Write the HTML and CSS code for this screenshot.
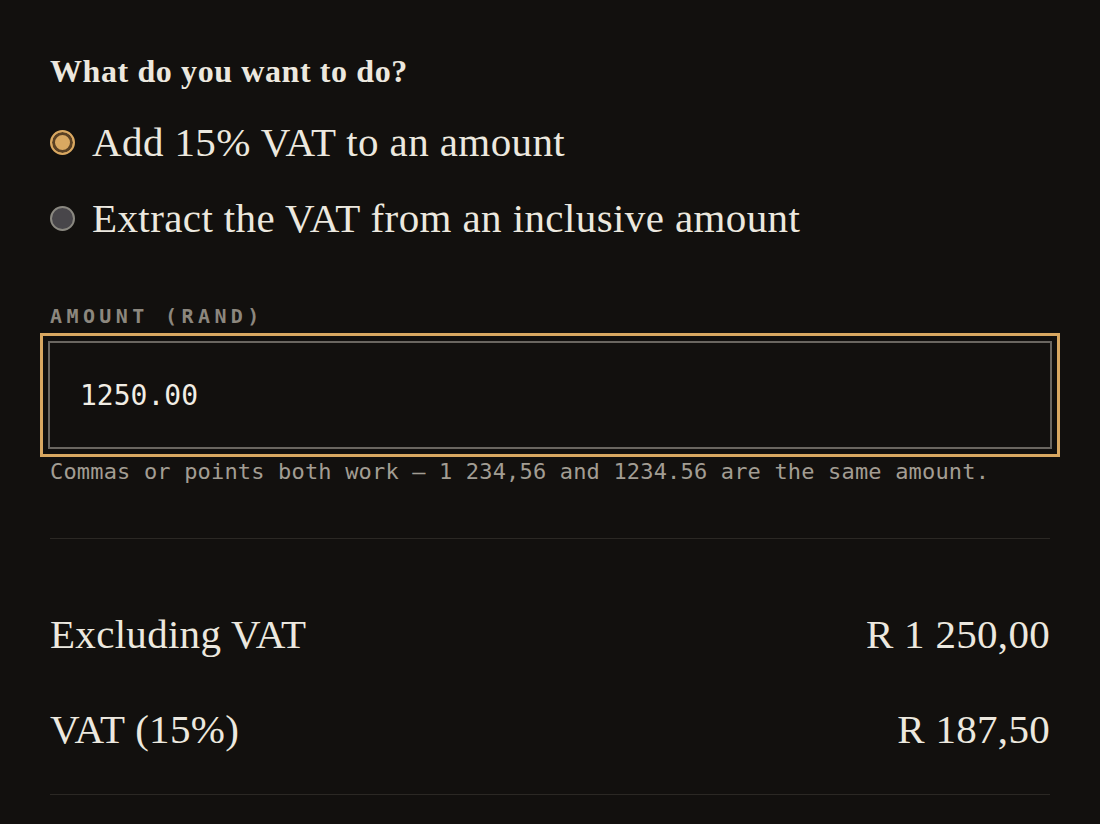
FILE: index.html
```html
<!DOCTYPE html>
<html lang="en">
<head>
<meta charset="utf-8">
<title>VAT calculator</title>
<link rel="stylesheet" href="styles.css">
</head>
<body>
<main class="calc">
  <fieldset class="mode">
    <legend class="mode-title">What do you want to do?</legend>
    <label class="option">
      <span class="radio radio-on"></span>
      <span class="option-text">Add 15% VAT to an amount</span>
    </label>
    <label class="option">
      <span class="radio"></span>
      <span class="option-text">Extract the VAT from an inclusive amount</span>
    </label>
  </fieldset>

  <div class="field">
    <div class="field-label">AMOUNT (RAND)</div>
    <div class="input-ring">
      <div class="input">1250.00</div>
    </div>
    <div class="hint">Commas or points both work — 1 234,56 and 1234.56 are the same amount.</div>
  </div>

  <div class="results">
    <div class="row">
      <span class="row-label">Excluding VAT</span>
      <span class="row-value">R 1 250,00</span>
    </div>
    <div class="row">
      <span class="row-label">VAT (15%)</span>
      <span class="row-value">R 187,50</span>
    </div>
  </div>
</main>
</body>
</html>
```

FILE: styles.css
```css
* { box-sizing: border-box; }
html, body {
  margin: 0;
  padding: 0;
  background: #12100e;
  color: #ece8df;
  font-family: "Liberation Serif", "Times New Roman", serif;
}
.calc {
  width: 1100px;
  padding: 51px 50px 0 50px;
}
.mode {
  border: 0;
  margin: 0;
  padding: 0;
}
.mode-title {
  padding: 0;
  font-weight: bold;
  font-size: 32px;
  letter-spacing: 0.6px;
  line-height: 40px;
  margin-bottom: 13px;
}
.option {
  display: flex;
  align-items: center;
  gap: 17px;
  height: 76px;
}
.option-text {
  font-size: 41px;
  letter-spacing: 0.4px;
  line-height: 48px;
}
.radio {
  width: 25px;
  height: 25px;
  border-radius: 50%;
  background: #48464a;
  border: 2px solid #8a8880;
  flex: none;
}
.radio-on {
  background: #d9a861;
  border: 2px solid #d9a861;
  box-shadow: inset 0 0 0 3px #5a4124;
}
.field {
  margin-top: 46px;
}
.field-label {
  font-family: "DejaVu Sans Mono", monospace;
  font-weight: bold;
  font-size: 20px;
  letter-spacing: 4.4px;
  color: #8c877e;
  line-height: 28px;
}
.input-ring {
  margin: 3px -10px 0 -10px;
  border: 3px solid #d9a861;
  padding: 5px;
}
.input {
  border: 2px solid #6a6660;
  height: 108px;
  padding: 0 30px;
  display: flex;
  align-items: center;
  font-family: "DejaVu Sans Mono", monospace;
  font-size: 28px;
  color: #f1ede4;
}
.hint {
  margin-top: 0;
  font-family: "DejaVu Sans Mono", monospace;
  font-size: 22px;
  letter-spacing: 0.17px;
  color: #a29d93;
  line-height: 30px;
  padding-bottom: 51px;
  border-bottom: 1px solid #2b2824;
}
.results {
  border-bottom: 1px solid #2b2824;
  padding: 48px 0 17px;
}
.row {
  display: flex;
  justify-content: space-between;
  align-items: baseline;
  font-size: 41px;
  letter-spacing: 0.3px;
  line-height: 95px;
}
```
